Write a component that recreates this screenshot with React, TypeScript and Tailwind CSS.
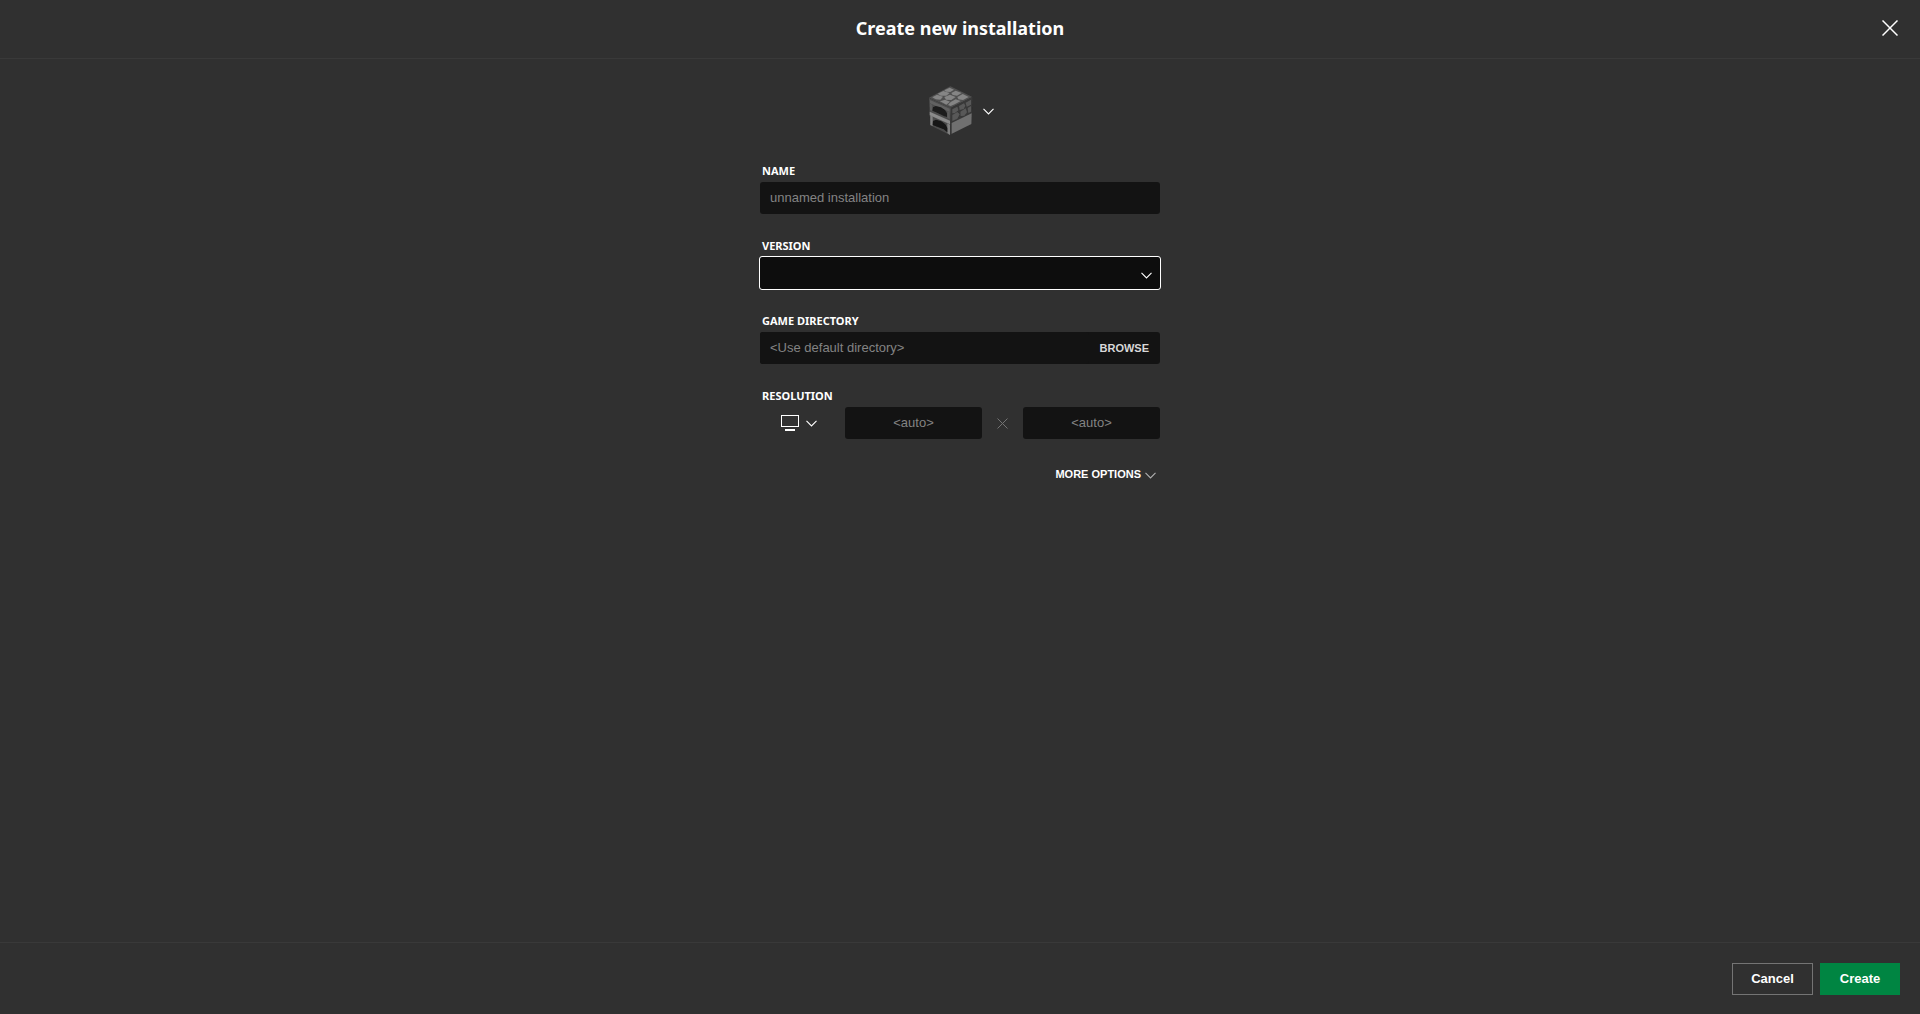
import { useState } from "react";
import type { ReactNode } from "react";

const inputClass =
  "h-8 rounded-[3px] bg-[#131313] pb-0.5 text-[13px] text-white placeholder:text-[#838383] outline-none";

type ChevronProps = {
  className?: string;
};

function Chevron({ className }: ChevronProps) {
  return (
    <svg
      width="11"
      height="7"
      viewBox="0 0 11 7"
      fill="none"
      stroke="currentColor"
      strokeWidth="1.1"
      className={className}
      aria-hidden="true">
      <path d="M0.5 0.8 L5.5 5.9 L10.5 0.8" />
    </svg>
  );
}

function Furnace() {
  return (
    <svg width="48" height="52" viewBox="36 30 144 156" aria-hidden="true">
      <defs>
        <filter id="soften">
          <feGaussianBlur stdDeviation="1.4" />
        </filter>
      </defs>
      <g filter="url(#soften)">
        {/* top */}
        <path d="M106 34 L172 66 L108 98 L42 68 Z" fill="#505050" />
        <g fill="#858585">
          <path d="M88 46 L104 38 L117 44 L106 51 L93 50 Z" />
          <path d="M68 56 L85 48 L104 54 L94 62 L77 62 Z" />
          <path d="M109 54 L122 47 L140 54 L126 62 L113 60 Z" />
          <path d="M52 67 L66 59 L84 65 L76 74 L62 73 Z" />
          <path d="M88 66 L105 59 L122 66 L109 75 L93 74 Z" />
          <path d="M127 66 L143 57 L161 66 L144 75 L130 73 Z" />
          <path d="M75 79 L90 74 L105 80 L94 89 Z" />
          <path d="M107 81 L122 73 L137 78 L119 88 L107 93 L99 90 Z" />
        </g>
        {/* front */}
        <path d="M42 69 L108 98 L105 180 L46 151 Z" fill="#4c4c4c" />
        <path d="M45 75 L104 101 L104 111 L45 85 Z" fill="#626262" />
        <path d="M45 86 L52 89 L52 108 L45 105 Z" fill="#5c5c5c" />
        <path d="M97 109 L104 112 L104 132 L97 129 Z" fill="#5c5c5c" />
        <path d="M44 110 L105 137 L105 148 L44 121 Z" fill="#8a8a8a" />
        <path
          d="M52 107 L54 97 L62 93 L78 97 L90 105 L96 115 L96 126 L88 124 L66 113 Z"
          fill="#1c1c1c"
        />
        <path d="M46 121 L53 124 L53 153 L46 150 Z" fill="#808080" />
        <path d="M97 145 L105 149 L105 180 L97 174 Z" fill="#808080" />
        <path
          d="M53 150 L54 138 L63 134 L79 139 L91 148 L97 159 L97 172 L86 163 L66 155 Z"
          fill="#161616"
        />
        {/* side */}
        <path d="M108 98 L172 66 L170 148 L105 180 Z" fill="#383838" />
        <g fill="#585858">
          <path d="M112 103 L127 95 L130 106 L120 114 L112 115 Z" />
          <path d="M132 93 L147 85 L151 92 L146 102 L134 105 Z" />
          <path d="M152 83 L168 74 L168 89 L155 95 Z" />
          <path d="M112 120 L127 111 L134 118 L127 131 L112 138 Z" />
          <path d="M136 110 L152 100 L156 112 L148 122 L137 123 Z" />
          <path d="M158 99 L168 93 L168 110 L160 114 Z" />
        </g>
        <path d="M110 144 L170 115 L169 147 L110 176 Z" fill="#707070" />
      </g>
    </svg>
  );
}

function Monitor() {
  return (
    <svg width="18" height="16" viewBox="0 0 18 16" aria-hidden="true">
      <rect
        x="0.5"
        y="0.5"
        width="17"
        height="11"
        fill="none"
        stroke="currentColor"
      />
      <path d="M4 14h10v2H4z" fill="currentColor" />
    </svg>
  );
}

type CrossProps = {
  size: number;
  strokeWidth: number;
};

function Cross({ size, strokeWidth }: CrossProps) {
  return (
    <svg
      width={size}
      height={size}
      viewBox={`0 0 ${size} ${size}`}
      stroke="currentColor"
      strokeWidth={strokeWidth}
      aria-hidden="true">
      <path d={`M0.5 0.5 L${size - 0.5} ${size - 0.5}`} />
      <path d={`M${size - 0.5} 0.5 L0.5 ${size - 0.5}`} />
    </svg>
  );
}

type FieldProps = {
  label: string;
  htmlFor: string;
  children: ReactNode;
};

function Field({ label, htmlFor, children }: FieldProps) {
  return (
    <div className="flex flex-col gap-1">
      <label
        htmlFor={htmlFor}
        className="pl-0.5 font-['Noto_Sans',sans-serif] text-[11px] leading-[15px] font-bold uppercase">
        {label}
      </label>
      {children}
    </div>
  );
}

export default function App() {
  const [name, setName] = useState("");
  const [directory, setDirectory] = useState("");

  return (
    <div className="flex min-h-screen flex-col bg-[#303030] font-['Liberation_Sans',Arial,sans-serif] text-white">
      <header className="grid h-[59px] grid-cols-[1fr_auto_1fr] items-center border-b border-[#393939] px-[22px] pb-0.5">
        <h1 className="col-start-2 font-['Noto_Sans',sans-serif] text-lg leading-6 font-bold">
          Create new installation
        </h1>
        <button type="button" aria-label="Close" className="justify-self-end">
          <Cross size={16} strokeWidth={1.5} />
        </button>
      </header>

      <form
        id="installation"
        className="mx-auto flex w-full max-w-[400px] grow flex-col gap-6 pt-[26px]"
        onSubmit={(e) => e.preventDefault()}>
        <button
          type="button"
          aria-label="Choose icon"
          className="mb-0.5 flex items-center gap-2 self-center">
          <Furnace />
          <Chevron />
        </button>

        <Field label="Name" htmlFor="name">
          <input
            id="name"
            className={`${inputClass} px-2.5`}
            placeholder="unnamed installation"
            value={name}
            onChange={(e) => setName(e.target.value)}
          />
        </Field>

        <Field label="Version" htmlFor="version">
          <div className="grid items-center">
            <select
              id="version"
              className="col-start-1 row-start-1 h-8 appearance-none rounded-[2px] bg-[#0d0d0d] px-2.5 text-[13px] outline outline-white">
              <option value=""></option>
            </select>
            <Chevron className="pointer-events-none col-start-1 row-start-1 mt-1 mr-2 justify-self-end" />
          </div>
        </Field>

        <Field label="Game directory" htmlFor="directory">
          <div className="flex rounded-[3px] bg-[#131313]">
            <input
              id="directory"
              className={`${inputClass} min-w-0 grow px-2.5`}
              placeholder="<Use default directory>"
              value={directory}
              onChange={(e) => setDirectory(e.target.value)}
            />
            <button
              type="button"
              className="px-[11px] text-[11px] font-bold text-[#d8d8d8]">
              BROWSE
            </button>
          </div>
        </Field>

        <Field label="Resolution" htmlFor="width">
          <div className="flex items-center">
            <button
              type="button"
              aria-label="Resolution presets"
              className="flex w-[85px] shrink-0 items-center gap-[7px] pl-[21px]">
              <Monitor />
              <Chevron />
            </button>
            <input
              id="width"
              className={`${inputClass} w-0 grow text-center`}
              placeholder="<auto>"
            />
            <span className="flex w-[41px] shrink-0 justify-center text-[#737373]">
              <Cross size={11} strokeWidth={1} />
            </span>
            <input
              aria-label="Height"
              className={`${inputClass} w-0 grow text-center`}
              placeholder="<auto>"
            />
          </div>
        </Field>

        <button
          type="button"
          className="mr-1 flex items-center gap-1 self-end text-[11px] leading-[22px] font-bold">
          MORE OPTIONS
          <Chevron className="mt-0.5 text-[#b0b0b0]" />
        </button>
      </form>

      <footer className="flex h-[72px] items-center justify-end gap-[7px] border-t border-[#393939] px-5 text-[13px] font-bold">
        <button
          type="button"
          className="h-8 w-[81px] border border-[#747474]">
          Cancel
        </button>
        <button
          type="submit"
          form="installation"
          className="h-8 w-20 bg-[#008542]">
          Create
        </button>
      </footer>
    </div>
  );
}
